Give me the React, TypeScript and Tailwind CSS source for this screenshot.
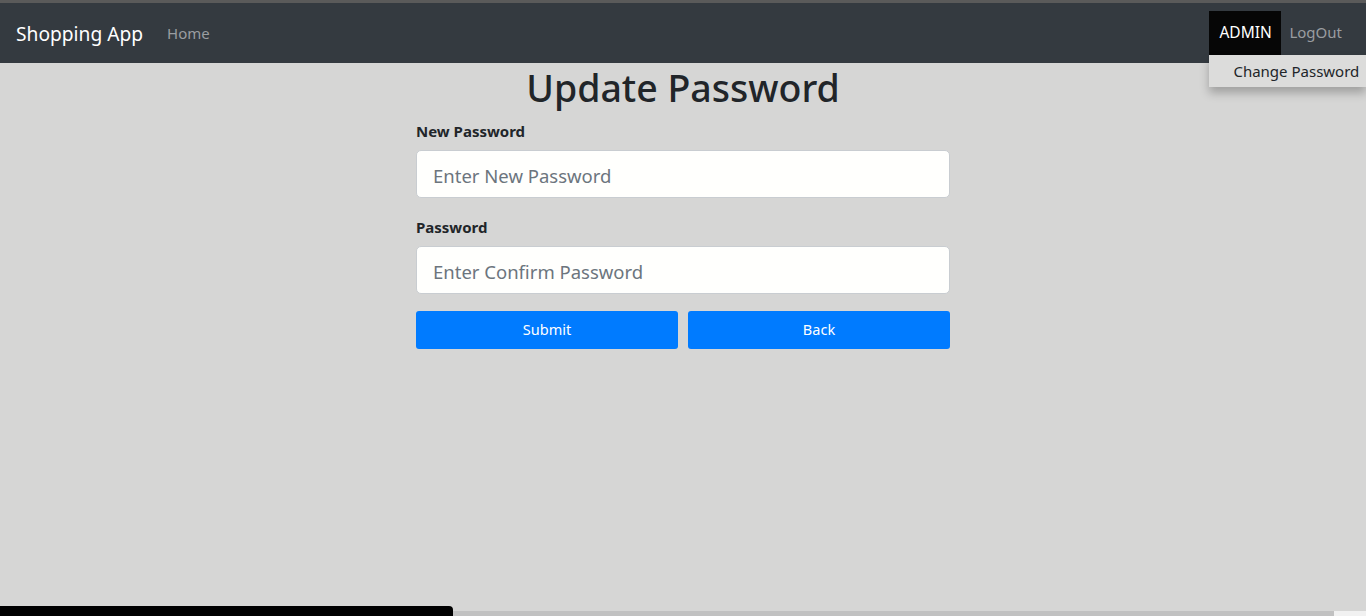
import React from 'react';

const font = { fontFamily: '"Noto Sans", "Open Sans", sans-serif' };

function Navbar() {
  return (
    <nav className="h-[60px] bg-[#343a40] flex items-center justify-between pl-4 relative">
      <div className="flex items-center">
        <span className="text-[19.2px] text-white mt-[2px]">Shopping App</span>
        <a className="ml-6 text-[15px] text-[#9a9da0] mt-[1px]">Home</a>
      </div>
      <div className="flex items-center h-full">
        <div className="relative">
          <button className="h-[44px] px-[10px] w-[72px] bg-[#060606] text-white text-[15.5px]">ADMIN</button>
          <div className="absolute left-0 top-[44px] w-[157px] h-[32px] bg-[#dcdcdb] shadow-[0_6px_10px_rgba(0,0,0,0.25)] flex items-center pl-6 text-[15px] text-[#212529] whitespace-nowrap z-10">
            Change Password
          </div>
        </div>
        <a className="ml-2 mr-6 text-[15px] text-[#9a9da0] -mt-[2px]">LogOut</a>
      </div>
    </nav>
  );
}

function Field({ label, placeholder }: { label: string; placeholder: string }) {
  return (
    <div className="flex flex-col">
      <label className="text-[15px] font-bold text-[#212529] mb-[9px] leading-5">{label}</label>
      <input
        type="password"
        placeholder={placeholder}
        className="h-[48px] w-full rounded-[5px] bg-[#fffffd] border border-[#c9cdd1] px-4 pt-[2px] text-[18.5px] placeholder:text-[#6c757d] outline-none"
        style={font}
      />
    </div>
  );
}

export default function App() {
  return (
    <div className="min-h-screen bg-[#d6d6d5] relative overflow-hidden" style={font}>
      <div className="h-[3px] bg-[#5a5a5a]" />
      <Navbar />
      <main className="flex flex-col items-center">
        <h1 className="mt-0 text-[37.5px] font-medium text-[#212529] leading-[50px]">Update Password</h1>
        <form className="w-[534px] mt-[8px] flex flex-col gap-[19px]">
          <Field label="New Password" placeholder="Enter New Password" />
          <Field label="Password" placeholder="Enter Confirm Password" />
        </form>
        <div className="w-[534px] mt-[17px] grid grid-cols-2 gap-[10px]">
          <button className="h-[38px] rounded-[3px] bg-[#007bff] text-white text-[14.5px]">Submit</button>
          <button className="h-[38px] rounded-[3px] bg-[#007bff] text-white text-[14.5px]">Back</button>
        </div>
      </main>
      <div className="absolute left-0 bottom-0 w-full h-[5px] bg-[#f1f1f1]">
        <div className="h-full w-[1334px] bg-[#c1c1c1]" />
      </div>
      <div className="absolute left-0 bottom-0 w-[453px] h-[10px] bg-black rounded-tr-[4px]" />
    </div>
  );
}
